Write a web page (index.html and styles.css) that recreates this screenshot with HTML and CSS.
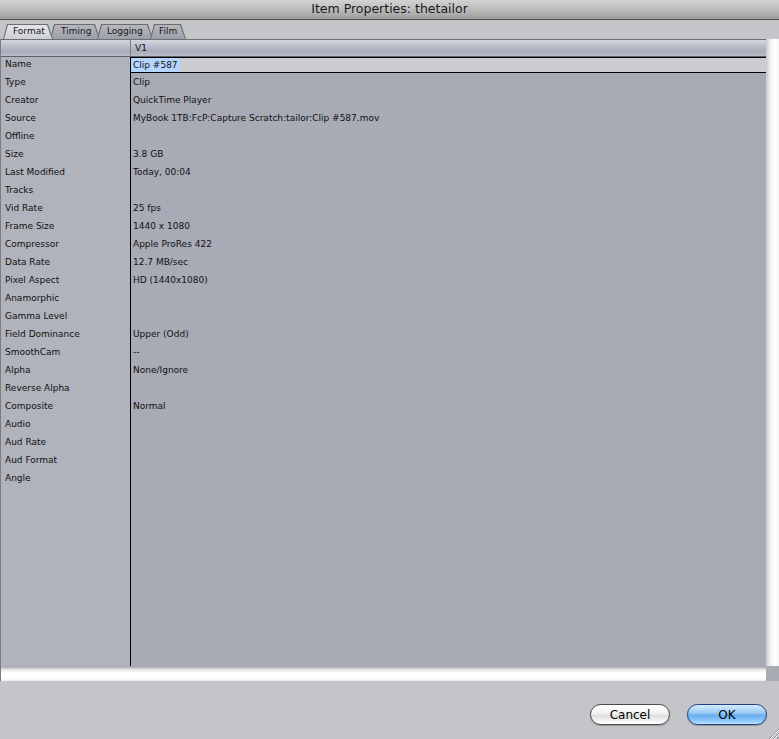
FILE: index.html
```html
<!DOCTYPE html>
<html>
<head>
<meta charset="utf-8">
<link rel="stylesheet" href="styles.css">
</head>
<body>
<div class="window">
  <div class="titlebar">Item Properties: thetailor</div>
  <div class="tabs">
    <div class="tab active">Format</div>
    <div class="tab">Timing</div>
    <div class="tab">Logging</div>
    <div class="tab">Film</div>
  </div>
  <div class="main">
    <div class="table">
      <div class="head">
        <div class="hl"></div>
        <div class="hr">V1</div>
      </div>
      <div class="body">
        <div class="labels">
          <div class="row">Name</div>
          <div class="row">Type</div>
          <div class="row">Creator</div>
          <div class="row">Source</div>
          <div class="row">Offline</div>
          <div class="row">Size</div>
          <div class="row">Last Modified</div>
          <div class="row">Tracks</div>
          <div class="row">Vid Rate</div>
          <div class="row">Frame Size</div>
          <div class="row">Compressor</div>
          <div class="row">Data Rate</div>
          <div class="row">Pixel Aspect</div>
          <div class="row">Anamorphic</div>
          <div class="row">Gamma Level</div>
          <div class="row">Field Dominance</div>
          <div class="row">SmoothCam</div>
          <div class="row">Alpha</div>
          <div class="row">Reverse Alpha</div>
          <div class="row">Composite</div>
          <div class="row">Audio</div>
          <div class="row">Aud Rate</div>
          <div class="row">Aud Format</div>
          <div class="row">Angle</div>
        </div>
        <div class="values">
          <div class="row edit"><div class="field"><span class="sel">Clip #587</span></div></div>
          <div class="row">Clip</div>
          <div class="row">QuickTime Player</div>
          <div class="row">MyBook 1TB:FcP:Capture Scratch:tailor:Clip #587.mov</div>
          <div class="row"></div>
          <div class="row">3.8 GB</div>
          <div class="row">Today, 00:04</div>
          <div class="row"></div>
          <div class="row">25 fps</div>
          <div class="row">1440 x 1080</div>
          <div class="row">Apple ProRes 422</div>
          <div class="row">12.7 MB/sec</div>
          <div class="row">HD (1440x1080)</div>
          <div class="row"></div>
          <div class="row"></div>
          <div class="row">Upper (Odd)</div>
          <div class="row">--</div>
          <div class="row">None/Ignore</div>
          <div class="row"></div>
          <div class="row">Normal</div>
          <div class="row"></div>
          <div class="row"></div>
          <div class="row"></div>
          <div class="row"></div>
        </div>
      </div>
    </div>
    <div class="vscroll"></div>
  </div>
  <div class="hrow">
    <div class="hscroll"></div>
    <div class="corner"></div>
  </div>
  <div class="footer">
    <button class="btn cancel">Cancel</button>
    <button class="btn ok">OK</button>
    <svg class="grip" width="14" height="12" viewBox="0 0 14 12">
      <path d="M4 12 L14 2 M8 12 L14 6 M12 12 L14 10" stroke="#8a8a8a" stroke-width="1" fill="none"/>
      <path d="M5 12 L14 3 M9 12 L14 7" stroke="#ffffff" stroke-width="1" fill="none"/>
    </svg>
  </div>
</div>
</body>
</html>
```
FILE: styles.css
```css
* { box-sizing: border-box; }
html, body { margin: 0; padding: 0; }
body {
  width: 779px;
  height: 739px;
  overflow: hidden;
  background: #c4c5c9;
  font-family: "DejaVu Sans", "Liberation Sans", sans-serif;
  color: #111;
}
.window {
  width: 779px;
  height: 739px;
  display: flex;
  flex-direction: column;
}
.titlebar {
  height: 20px;
  background: linear-gradient(#d2d2d2, #bcbcbc 50%, #9c9c9c);
  border-bottom: 1px solid #505050;
  text-align: center;
  font-size: 12.5px;
  line-height: 18px;
  color: #1a1a1a;
}
.tabs {
  height: 19px;
  display: flex;
  align-items: flex-end;
  padding-left: 3px;
}
.tab {
  position: relative;
  z-index: 1;
  height: 15px;
  line-height: 15px;
  font-size: 9px;
  padding: 0 10px 0 10px;
  margin-right: -3px;
  color: #1a1a1a;
}
.tab:nth-child(1) { width: 50px; }
.tab:nth-child(2) { width: 50px; padding-left: 11px; }
.tab:nth-child(3) { width: 56px; }
.tab:nth-child(4) { width: 36px; padding: 0 8px 0 9px; }
.tab::before,
.tab::after {
  content: "";
  position: absolute;
  z-index: -1;
  border-radius: 3px 3px 0 0;
}
.tab::before {
  inset: 0;
  background: #6c6d72;
  clip-path: polygon(4px 0, calc(100% - 5px) 0, 100% 100%, 0 100%);
}
.tab::after {
  top: 1px;
  bottom: 0;
  left: 1px;
  right: 1px;
  background: linear-gradient(#b6b8be, #9c9fa7);
  clip-path: polygon(4px 0, calc(100% - 5px) 0, 100% 100%, 0 100%);
}
.tab.active { z-index: 5; }
.tab.active::after {
  background: linear-gradient(#e4e5e8, #cfd0d4);
}
.main {
  height: 627px;
  display: flex;
}
.table {
  flex: 1;
  display: flex;
  flex-direction: column;
  border-left: 1px solid #7c7c80;
}
.head {
  height: 18px;
  display: flex;
  border-top: 1px solid #6c6f78;
  border-bottom: 1px solid #5e6068;
  background: linear-gradient(#d4d7de, #bec2cc 35%, #a8adba 70%, #b9bcc6);
}
.hl {
  width: 130px;
  border-right: 1px solid #7e818a;
}
.hr {
  flex: 1;
  font-size: 9px;
  line-height: 16px;
  padding-left: 4px;
}
.body {
  flex: 1;
  display: flex;
}
.labels {
  width: 130px;
  background: #b0b3bb;
  border-right: 1px solid #000;
}
.values {
  flex: 1;
  background: #a8abb5;
}
.row {
  height: 18px;
  font-size: 9px;
  line-height: 15px;
  padding-left: 4px;
  white-space: nowrap;
}
.values .row { padding-left: 2px; }
.values .row.edit { padding-left: 0; }
.field {
  height: 16px;
  background: #cbccd0;
  border-top: 1px solid #000;
  border-bottom: 1px solid #000;
  line-height: 14px;
}
.sel {
  display: inline-block;
  background: #b5d5ff;
  padding: 0 2px 0 2px;
  height: 14px;
}
.vscroll {
  width: 13px;
  background: linear-gradient(to right, #c8c8c8, #f2f2f2 35%, #ffffff 70%, #f4f4f4);
}
.hrow {
  height: 15px;
  display: flex;
}
.hscroll {
  flex: 1;
  border-left: 1px solid #7c7c80;
  background: linear-gradient(#9c9ea4, #e6e6e6 25%, #ffffff 45%, #ffffff 80%, #ececec);
}
.corner {
  width: 13px;
  background: #a9abb3;
}
.footer {
  flex: 1;
  position: relative;
  display: flex;
  justify-content: flex-end;
  align-items: flex-start;
  padding: 23px 12px 0 0;
  gap: 17px;
}
.btn {
  width: 80px;
  height: 21px;
  border-radius: 11px;
  font-family: "DejaVu Sans", "Liberation Sans", sans-serif;
  font-size: 12px;
  line-height: 18px;
  padding: 0;
  color: #000;
}
.cancel {
  border: 1px solid #4a4a4a;
  background: linear-gradient(#ffffff, #f2f2f2 45%, #dedede 55%, #f4f4f4 85%, #ffffff);
  box-shadow: 0 1px 1px rgba(0,0,0,0.25);
}
.ok {
  border: 1px solid #223f84;
  background: linear-gradient(#d6ebff, #9cccf7 40%, #6aaeef 55%, #8ecbff 85%, #c6e6ff);
  box-shadow: 0 1px 1px rgba(0,0,0,0.25);
}
.grip {
  position: absolute;
  right: 0;
  bottom: 0;
}
```
